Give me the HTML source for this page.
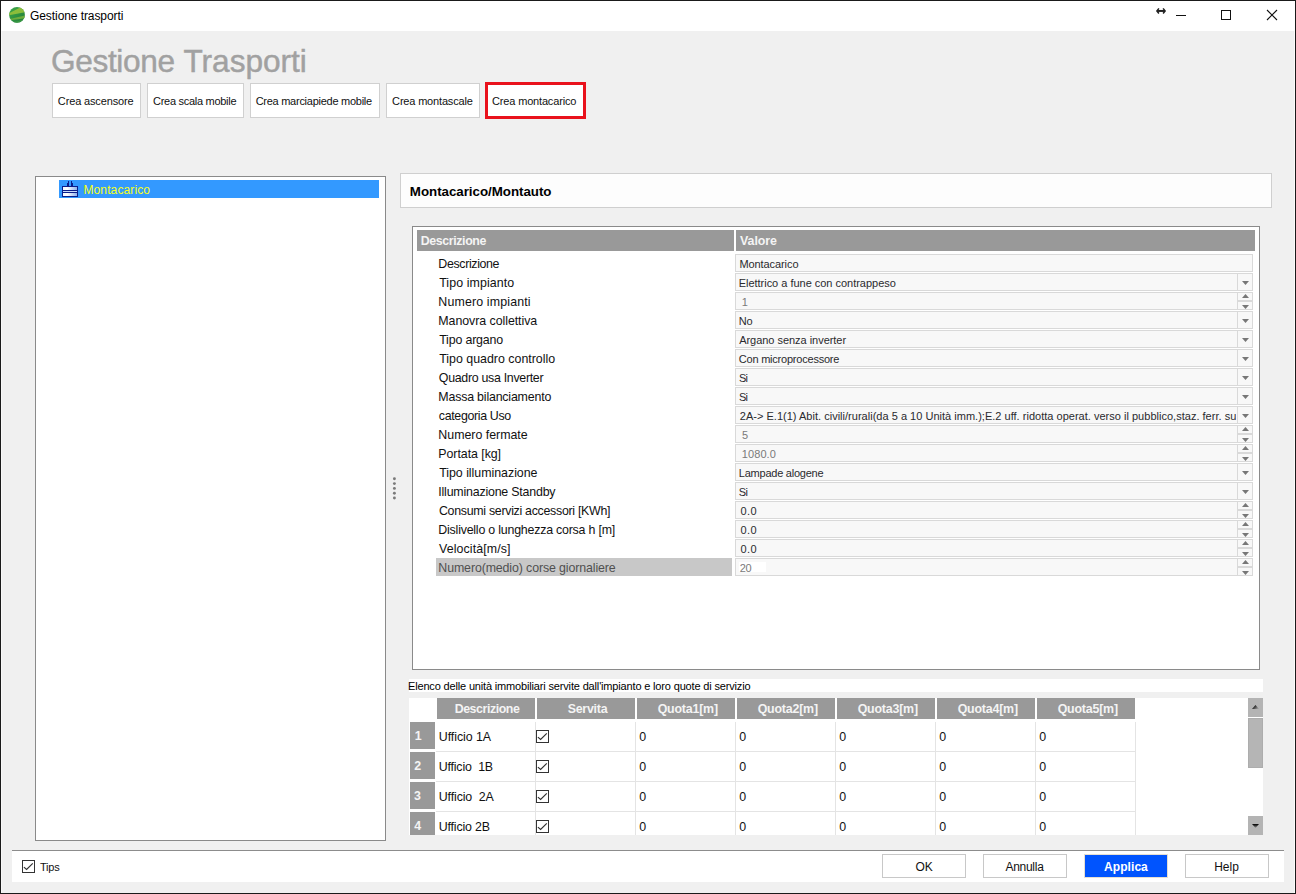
<!DOCTYPE html><html lang="it"><head><meta charset="utf-8"><title>Gestione trasporti</title><style>
*{box-sizing:border-box;margin:0;padding:0}
html,body{width:1296px;height:894px;overflow:hidden;background:#f0f0f0;font-family:"Liberation Sans",sans-serif;color:#000}
.a{position:absolute}
.t{position:absolute;white-space:nowrap}
.btn{position:absolute;top:83px;height:35px;background:#fff;border:1px solid #d0d0d0}
.fld{position:absolute;left:735px;width:518px;height:18px;background:#f8f8f8;border:1px solid #d9d9d9}
.bt{position:absolute;left:1237px;width:16px;height:18px;border-left:1px solid #d9d9d9}
.hd{position:absolute;background:#999}
.rh{position:absolute;left:410px;width:25px;background:#999}
.cb{position:absolute;width:13px;height:13px;border:1px solid #333;background:#fff}
.bb{position:absolute;top:854px;height:24px;width:84px;background:#fff;border:1px solid #c8c8c8}
.gl{position:absolute;background:#e4e4e4}
</style></head><body>
<div class="a" style="left:0;top:0;width:1296px;height:1px;background:#1a1a1a"></div>
<div class="a" style="left:0;top:0;width:1px;height:894px;background:#1a1a1a"></div>
<div class="a" style="left:1295px;top:0;width:1px;height:894px;background:#1a1a1a"></div>
<div class="a" style="left:0;top:893px;width:1296px;height:1px;background:#1a1a1a"></div>
<div class="a" style="left:1294px;top:31px;width:1px;height:862px;background:#fbfbfb"></div>
<div class="a" style="left:1px;top:31px;width:1px;height:862px;background:#f8f8f8"></div>
<div class="a" style="left:1px;top:1px;width:1294px;height:30px;background:#fff"></div>
<svg class="a" style="left:9px;top:7px" width="16" height="16" viewBox="0 0 16 16"><defs><clipPath id="cc"><circle cx="8" cy="7.9" r="7.9"/></clipPath><linearGradient id="cg" x1="0" y1="0" x2="1" y2="1"><stop offset="0" stop-color="#3fa94a"/><stop offset="0.55" stop-color="#2c8f40"/><stop offset="1" stop-color="#237a3c"/></linearGradient></defs><g clip-path="url(#cc)"><rect width="16" height="16" fill="url(#cg)"/><path d="M-1 6.6 Q5.5 3.6 11.2 0.6 L17 1 L17 5 Q8 6.9 -1 8.4Z" fill="#8bbd3b"/><path d="M1 11.9 Q8 10.2 17 8.2 L17 11 Q9 12.1 2.4 13.1Z" fill="#6dac3b"/><path d="M3 14.6 Q9 14.9 14 12.6 L12 15.5 L6 16Z" fill="#3a9a44"/></g></svg>
<div class="t" id="f1" style="left:30.02px;top:9.34px;font-size:12px;line-height:15px;color:#000;letter-spacing:-0.079px;">Gestione trasporti</div>
<svg class="a" style="left:1150px;top:4px" width="140" height="24" viewBox="0 0 140 24"><path d="M8.9 4.4 L6.9 6.95 L8.9 9.5 M13.1 4.4 L15.1 6.95 L13.1 9.5" fill="none" stroke="#222" stroke-width="1.5"/><path d="M7 6.95 H15" stroke="#222" stroke-width="2"/><rect x="26" y="11" width="10" height="1" fill="#111"/><rect x="71.5" y="6.5" width="9" height="9" fill="none" stroke="#111" stroke-width="1"/><path d="M117 6 L127 16 M127 6 L117 16" stroke="#111" stroke-width="1.1" fill="none"/></svg>
<div class="t" id="f2" style="left:51.09px;top:42.05px;font-size:31.6px;line-height:38px;color:#a1a1a1;letter-spacing:-0.357px;-webkit-text-stroke:0.45px #a1a1a1;">Gestione</div>
<div class="t" id="f3" style="left:183.51px;top:42.05px;font-size:31.6px;line-height:38px;color:#a1a1a1;letter-spacing:-0.027px;-webkit-text-stroke:0.45px #a1a1a1;">Trasporti</div>
<div class="btn" style="left:52px;width:89px"></div>
<div class="t" id="f4" style="left:57.87px;top:94.19px;font-size:11px;line-height:14px;color:#111;letter-spacing:-0.143px;">Crea ascensore</div>
<div class="btn" style="left:147px;width:97px"></div>
<div class="t" id="f5" style="left:153.04px;top:94.19px;font-size:11px;line-height:14px;color:#111;letter-spacing:-0.283px;">Crea scala mobile</div>
<div class="btn" style="left:250px;width:130px"></div>
<div class="t" id="f6" style="left:255.65px;top:94.19px;font-size:11px;line-height:14px;color:#111;letter-spacing:-0.263px;">Crea marciapiede mobile</div>
<div class="btn" style="left:386px;width:94px"></div>
<div class="t" id="f7" style="left:392.12px;top:94.19px;font-size:11px;line-height:14px;color:#111;letter-spacing:-0.175px;">Crea montascale</div>
<div class="btn" style="left:485px;top:82px;width:101px;height:37px;border:3px solid #e9121c"></div>
<div class="t" id="f8" style="left:492.08px;top:94.19px;font-size:11px;line-height:14px;color:#111;letter-spacing:-0.169px;">Crea montacarico</div>
<div class="a" style="left:35px;top:176px;width:351px;height:665px;background:#fff;border:1px solid #8a8a8a"></div>
<div class="a" style="left:59px;top:180px;width:320px;height:18px;background:#3399ff"></div>
<svg class="a" style="left:62px;top:181px" width="16" height="16" viewBox="0 0 16 16" shape-rendering="crispEdges"><defs><linearGradient id="ig" x1="0" y1="0" x2="1" y2="0"><stop offset="0" stop-color="#f2f7ff"/><stop offset="0.3" stop-color="#ffffff"/><stop offset="1" stop-color="#8fb1ec"/></linearGradient></defs><rect x="6" y="0" width="1" height="5" fill="#0b1d8a"/><rect x="5" y="2" width="2" height="3" fill="#0b1d8a"/><rect x="9" y="0" width="1" height="5" fill="#0b1d8a"/><rect x="9" y="2" width="2" height="3" fill="#0b1d8a"/><rect x="0" y="5" width="16" height="11" fill="#0b1d8a"/><rect x="1" y="6" width="14" height="3" fill="url(#ig)"/><rect x="1" y="10" width="14" height="1" fill="#c9dcfb"/><rect x="1" y="12" width="14" height="3" fill="url(#ig)"/></svg>
<div class="t" id="f9" style="left:83.48px;top:183.34px;font-size:12px;line-height:15px;color:#f6ff20;letter-spacing:0.117px;">Montacarico</div>
<svg class="a" style="left:390px;top:474px" width="9" height="30" viewBox="0 0 9 30"><circle cx="4.4" cy="4.8" r="1.45" fill="#7a7a7a"/><circle cx="4.4" cy="9.6" r="1.45" fill="#7a7a7a"/><circle cx="4.4" cy="14.4" r="1.45" fill="#7a7a7a"/><circle cx="4.4" cy="19.2" r="1.45" fill="#7a7a7a"/><circle cx="4.4" cy="24.0" r="1.45" fill="#7a7a7a"/></svg>
<div class="a" style="left:400px;top:173px;width:872px;height:35px;background:#fdfdfd;border:1px solid #cfcfcf"></div>
<div class="t" id="f10" style="left:409.83px;top:183.88px;font-size:13.33px;line-height:16px;color:#000;font-weight:bold;letter-spacing:-0.026px;">Montacarico/Montauto</div>
<div class="a" style="left:412px;top:226px;width:848px;height:444px;background:#fff;border:1px solid #8a8a8a"></div>
<div class="hd" style="left:417px;top:230px;width:317px;height:21px"></div>
<div class="hd" style="left:736px;top:230px;width:519px;height:21px"></div>
<div class="t" id="f11" style="left:420.73px;top:234.20px;font-size:12.4px;line-height:15px;color:#f4f4f4;font-weight:bold;letter-spacing:-0.388px;">Descrizione</div>
<div class="t" id="f12" style="left:740.11px;top:234.20px;font-size:12.4px;line-height:15px;color:#f4f4f4;font-weight:bold;letter-spacing:-0.068px;">Valore</div>
<div class="t" id="f13" style="left:438.34px;top:257.20px;font-size:12.4px;line-height:15px;color:#111;letter-spacing:-0.355px;">Descrizione</div>
<div class="fld" style="top:254px"></div>
<div class="t" id="f14" style="left:739.42px;top:257.19px;font-size:11px;line-height:14px;color:#2a2a2e;letter-spacing:-0.081px;">Montacarico</div>
<div class="t" id="f15" style="left:439.17px;top:276.20px;font-size:12.4px;line-height:15px;color:#111;letter-spacing:0.087px;">Tipo impianto</div>
<div class="fld" style="top:273px"></div>
<div class="a" style="left:736px;top:274px;width:500.4px;height:16px;overflow:hidden"><div class="a" style="left:-736px;top:-274px"><div class="t" id="f16" style="left:738.65px;top:276.19px;font-size:11px;line-height:14px;color:#2a2a2e;letter-spacing:-0.018px;">Elettrico a fune con contrappeso</div></div></div>
<div class="bt" style="top:273px"><svg class="a" style="left:4px;top:8px" width="7" height="4" viewBox="0 0 7 4"><path d="M0 0H7L3.5 4Z" fill="#777"/></svg></div>
<div class="t" id="f17" style="left:438.34px;top:295.20px;font-size:12.4px;line-height:15px;color:#111;letter-spacing:0.146px;">Numero impianti</div>
<div class="fld" style="top:292px"></div>
<div class="t" id="f18" style="left:741.78px;top:295.19px;font-size:11px;line-height:14px;color:#7a7a7a;">1</div>
<div class="bt" style="top:292px"><div class="a" style="left:0;top:8px;width:15px;height:2px;background:#d9d9d9"></div><svg class="a" style="left:4px;top:2px" width="7" height="4" viewBox="0 0 7 4"><path d="M0 4H7L3.5 0Z" fill="#777"/></svg><svg class="a" style="left:4px;top:13px" width="7" height="4" viewBox="0 0 7 4"><path d="M0 0H7L3.5 4Z" fill="#777"/></svg></div>
<div class="t" id="f19" style="left:438.34px;top:314.20px;font-size:12.4px;line-height:15px;color:#111;letter-spacing:-0.056px;">Manovra collettiva</div>
<div class="fld" style="top:311px"></div>
<div class="a" style="left:736px;top:312px;width:500.4px;height:16px;overflow:hidden"><div class="a" style="left:-736px;top:-312px"><div class="t" id="f20" style="left:738.72px;top:314.19px;font-size:11px;line-height:14px;color:#2a2a2e;letter-spacing:-0.168px;">No</div></div></div>
<div class="bt" style="top:311px"><svg class="a" style="left:4px;top:8px" width="7" height="4" viewBox="0 0 7 4"><path d="M0 0H7L3.5 4Z" fill="#777"/></svg></div>
<div class="t" id="f21" style="left:439.17px;top:333.20px;font-size:12.4px;line-height:15px;color:#111;letter-spacing:-0.163px;">Tipo argano</div>
<div class="fld" style="top:330px"></div>
<div class="a" style="left:736px;top:331px;width:500.4px;height:16px;overflow:hidden"><div class="a" style="left:-736px;top:-331px"><div class="t" id="f22" style="left:739.16px;top:333.19px;font-size:11px;line-height:14px;color:#2a2a2e;letter-spacing:-0.033px;">Argano senza inverter</div></div></div>
<div class="bt" style="top:330px"><svg class="a" style="left:4px;top:8px" width="7" height="4" viewBox="0 0 7 4"><path d="M0 0H7L3.5 4Z" fill="#777"/></svg></div>
<div class="t" id="f23" style="left:439.17px;top:352.20px;font-size:12.4px;line-height:15px;color:#111;letter-spacing:0.002px;">Tipo quadro controllo</div>
<div class="fld" style="top:349px"></div>
<div class="a" style="left:736px;top:350px;width:500.4px;height:16px;overflow:hidden"><div class="a" style="left:-736px;top:-350px"><div class="t" id="f24" style="left:738.77px;top:352.19px;font-size:11px;line-height:14px;color:#2a2a2e;letter-spacing:-0.215px;">Con microprocessore</div></div></div>
<div class="bt" style="top:349px"><svg class="a" style="left:4px;top:8px" width="7" height="4" viewBox="0 0 7 4"><path d="M0 0H7L3.5 4Z" fill="#777"/></svg></div>
<div class="t" id="f25" style="left:438.83px;top:371.20px;font-size:12.4px;line-height:15px;color:#111;letter-spacing:-0.304px;">Quadro usa Inverter</div>
<div class="fld" style="top:368px"></div>
<div class="a" style="left:736px;top:369px;width:500.4px;height:16px;overflow:hidden"><div class="a" style="left:-736px;top:-369px"><div class="t" id="f26" style="left:739.06px;top:371.19px;font-size:11px;line-height:14px;color:#2a2a2e;letter-spacing:-0.784px;">Si</div></div></div>
<div class="bt" style="top:368px"><svg class="a" style="left:4px;top:8px" width="7" height="4" viewBox="0 0 7 4"><path d="M0 0H7L3.5 4Z" fill="#777"/></svg></div>
<div class="t" id="f27" style="left:438.34px;top:390.20px;font-size:12.4px;line-height:15px;color:#111;letter-spacing:-0.191px;">Massa bilanciamento</div>
<div class="fld" style="top:387px"></div>
<div class="a" style="left:736px;top:388px;width:500.4px;height:16px;overflow:hidden"><div class="a" style="left:-736px;top:-388px"><div class="t" id="f28" style="left:739.06px;top:390.19px;font-size:11px;line-height:14px;color:#2a2a2e;letter-spacing:-0.784px;">Si</div></div></div>
<div class="bt" style="top:387px"><svg class="a" style="left:4px;top:8px" width="7" height="4" viewBox="0 0 7 4"><path d="M0 0H7L3.5 4Z" fill="#777"/></svg></div>
<div class="t" id="f29" style="left:438.82px;top:409.20px;font-size:12.4px;line-height:15px;color:#111;letter-spacing:-0.339px;">categoria Uso</div>
<div class="fld" style="top:406px"></div>
<div class="a" style="left:736px;top:407px;width:500.4px;height:16px;overflow:hidden"><div class="a" style="left:-736px;top:-407px"><div class="t" id="f30" style="left:739.82px;top:409.19px;font-size:11px;line-height:14px;color:#2a2a2e;letter-spacing:0.016px;">2A-&gt; E.1(1) Abit. civili/rurali(da 5 a 10 Unità imm.);E.2 uff. ridotta operat. verso il pubblico,staz. ferr. su</div></div></div>
<div class="bt" style="top:406px"><svg class="a" style="left:4px;top:8px" width="7" height="4" viewBox="0 0 7 4"><path d="M0 0H7L3.5 4Z" fill="#777"/></svg></div>
<div class="t" id="f31" style="left:438.34px;top:428.20px;font-size:12.4px;line-height:15px;color:#111;letter-spacing:-0.015px;">Numero fermate</div>
<div class="fld" style="top:425px"></div>
<div class="t" id="f32" style="left:742.01px;top:428.19px;font-size:11px;line-height:14px;color:#7a7a7a;">5</div>
<div class="bt" style="top:425px"><div class="a" style="left:0;top:8px;width:15px;height:2px;background:#d9d9d9"></div><svg class="a" style="left:4px;top:2px" width="7" height="4" viewBox="0 0 7 4"><path d="M0 4H7L3.5 0Z" fill="#777"/></svg><svg class="a" style="left:4px;top:13px" width="7" height="4" viewBox="0 0 7 4"><path d="M0 0H7L3.5 4Z" fill="#777"/></svg></div>
<div class="t" id="f33" style="left:438.34px;top:447.20px;font-size:12.4px;line-height:15px;color:#111;letter-spacing:-0.059px;">Portata [kg]</div>
<div class="fld" style="top:444px"></div>
<div class="t" id="f34" style="left:741.79px;top:447.19px;font-size:11px;line-height:14px;color:#7a7a7a;letter-spacing:0.083px;">1080.0</div>
<div class="bt" style="top:444px"><div class="a" style="left:0;top:8px;width:15px;height:2px;background:#d9d9d9"></div><svg class="a" style="left:4px;top:2px" width="7" height="4" viewBox="0 0 7 4"><path d="M0 4H7L3.5 0Z" fill="#777"/></svg><svg class="a" style="left:4px;top:13px" width="7" height="4" viewBox="0 0 7 4"><path d="M0 0H7L3.5 4Z" fill="#777"/></svg></div>
<div class="t" id="f35" style="left:439.17px;top:466.20px;font-size:12.4px;line-height:15px;color:#111;letter-spacing:-0.022px;">Tipo illuminazione</div>
<div class="fld" style="top:463px"></div>
<div class="a" style="left:736px;top:464px;width:500.4px;height:16px;overflow:hidden"><div class="a" style="left:-736px;top:-464px"><div class="t" id="f36" style="left:738.84px;top:466.19px;font-size:11px;line-height:14px;color:#2a2a2e;letter-spacing:-0.238px;">Lampade alogene</div></div></div>
<div class="bt" style="top:463px"><svg class="a" style="left:4px;top:8px" width="7" height="4" viewBox="0 0 7 4"><path d="M0 0H7L3.5 4Z" fill="#777"/></svg></div>
<div class="t" id="f37" style="left:438.30px;top:485.20px;font-size:12.4px;line-height:15px;color:#111;letter-spacing:-0.198px;">Illuminazione Standby</div>
<div class="fld" style="top:482px"></div>
<div class="a" style="left:736px;top:483px;width:500.4px;height:16px;overflow:hidden"><div class="a" style="left:-736px;top:-483px"><div class="t" id="f38" style="left:738.85px;top:485.19px;font-size:11px;line-height:14px;color:#2a2a2e;letter-spacing:-0.606px;">Si</div></div></div>
<div class="bt" style="top:482px"><svg class="a" style="left:4px;top:8px" width="7" height="4" viewBox="0 0 7 4"><path d="M0 0H7L3.5 4Z" fill="#777"/></svg></div>
<div class="t" id="f39" style="left:438.91px;top:504.20px;font-size:12.4px;line-height:15px;color:#111;letter-spacing:-0.293px;">Consumi servizi accessori [KWh]</div>
<div class="fld" style="top:501px"></div>
<div class="t" id="f40" style="left:740.44px;top:504.19px;font-size:11px;line-height:14px;color:#2a2a2e;letter-spacing:0.422px;">0.0</div>
<div class="bt" style="top:501px"><div class="a" style="left:0;top:8px;width:15px;height:2px;background:#d9d9d9"></div><svg class="a" style="left:4px;top:2px" width="7" height="4" viewBox="0 0 7 4"><path d="M0 4H7L3.5 0Z" fill="#777"/></svg><svg class="a" style="left:4px;top:13px" width="7" height="4" viewBox="0 0 7 4"><path d="M0 0H7L3.5 4Z" fill="#777"/></svg></div>
<div class="t" id="f41" style="left:438.34px;top:523.20px;font-size:12.4px;line-height:15px;color:#111;letter-spacing:-0.212px;">Dislivello o lunghezza corsa h [m]</div>
<div class="fld" style="top:520px"></div>
<div class="t" id="f42" style="left:740.44px;top:523.19px;font-size:11px;line-height:14px;color:#2a2a2e;letter-spacing:0.422px;">0.0</div>
<div class="bt" style="top:520px"><div class="a" style="left:0;top:8px;width:15px;height:2px;background:#d9d9d9"></div><svg class="a" style="left:4px;top:2px" width="7" height="4" viewBox="0 0 7 4"><path d="M0 4H7L3.5 0Z" fill="#777"/></svg><svg class="a" style="left:4px;top:13px" width="7" height="4" viewBox="0 0 7 4"><path d="M0 0H7L3.5 4Z" fill="#777"/></svg></div>
<div class="t" id="f43" style="left:439.12px;top:542.20px;font-size:12.4px;line-height:15px;color:#111;letter-spacing:0.087px;">Velocità[m/s]</div>
<div class="fld" style="top:539px"></div>
<div class="t" id="f44" style="left:740.44px;top:542.19px;font-size:11px;line-height:14px;color:#2a2a2e;letter-spacing:0.422px;">0.0</div>
<div class="bt" style="top:539px"><div class="a" style="left:0;top:8px;width:15px;height:2px;background:#d9d9d9"></div><svg class="a" style="left:4px;top:2px" width="7" height="4" viewBox="0 0 7 4"><path d="M0 4H7L3.5 0Z" fill="#777"/></svg><svg class="a" style="left:4px;top:13px" width="7" height="4" viewBox="0 0 7 4"><path d="M0 0H7L3.5 4Z" fill="#777"/></svg></div>
<div class="a" style="left:436px;top:558px;width:296px;height:18px;background:#c8c8c8"></div>
<div class="t" id="f45" style="left:438.34px;top:561.20px;font-size:12.4px;line-height:15px;color:#505050;letter-spacing:-0.126px;">Numero(medio) corse giornaliere</div>
<div class="fld" style="top:558px"></div>
<div class="a nofit" style="left:739px;top:562px;width:27px;height:10px;background:#fff"></div>
<div class="t" id="f46" style="left:739.79px;top:561.19px;font-size:11px;line-height:14px;color:#7a7a7a;letter-spacing:-0.398px;">20</div>
<div class="bt" style="top:558px"><div class="a" style="left:0;top:8px;width:15px;height:2px;background:#d9d9d9"></div><svg class="a" style="left:4px;top:2px" width="7" height="4" viewBox="0 0 7 4"><path d="M0 4H7L3.5 0Z" fill="#777"/></svg><svg class="a" style="left:4px;top:13px" width="7" height="4" viewBox="0 0 7 4"><path d="M0 0H7L3.5 4Z" fill="#777"/></svg></div>
<div class="a" style="left:409px;top:679px;width:854px;height:13px;background:#fff"></div>
<div class="t" id="f47" style="left:408.00px;top:679.19px;font-size:11px;line-height:14px;color:#000;letter-spacing:-0.162px;">Elenco delle unità immobiliari servite dall'impianto e loro quote di servizio</div>
<div class="a" style="left:409px;top:698px;width:854px;height:137px;background:#fff"></div>
<div class="hd" style="left:437px;top:698px;width:98px;height:21px"></div>
<div class="t" id="f48" style="left:454.66px;top:702.20px;font-size:12.4px;line-height:15px;color:#f4f4f4;font-weight:bold;letter-spacing:-0.444px;">Descrizione</div>
<div class="hd" style="left:537px;top:698px;width:98px;height:21px"></div>
<div class="t" id="f49" style="left:567.65px;top:702.20px;font-size:12.4px;line-height:15px;color:#f4f4f4;font-weight:bold;letter-spacing:-0.239px;">Servita</div>
<div class="hd" style="left:637px;top:698px;width:98px;height:21px"></div>
<div class="t" id="f50" style="left:657.69px;top:702.20px;font-size:12.4px;line-height:15px;color:#f4f4f4;font-weight:bold;letter-spacing:-0.204px;">Quota1[m]</div>
<div class="hd" style="left:737px;top:698px;width:98px;height:21px"></div>
<div class="t" id="f51" style="left:757.69px;top:702.20px;font-size:12.4px;line-height:15px;color:#f4f4f4;font-weight:bold;letter-spacing:-0.204px;">Quota2[m]</div>
<div class="hd" style="left:837px;top:698px;width:98px;height:21px"></div>
<div class="t" id="f52" style="left:857.69px;top:702.20px;font-size:12.4px;line-height:15px;color:#f4f4f4;font-weight:bold;letter-spacing:-0.204px;">Quota3[m]</div>
<div class="hd" style="left:937px;top:698px;width:98px;height:21px"></div>
<div class="t" id="f53" style="left:957.69px;top:702.20px;font-size:12.4px;line-height:15px;color:#f4f4f4;font-weight:bold;letter-spacing:-0.204px;">Quota4[m]</div>
<div class="hd" style="left:1037px;top:698px;width:98px;height:21px"></div>
<div class="t" id="f54" style="left:1057.69px;top:702.20px;font-size:12.4px;line-height:15px;color:#f4f4f4;font-weight:bold;letter-spacing:-0.204px;">Quota5[m]</div>
<div class="rh" style="top:722px;height:27px"></div>
<div class="t" id="f55" style="left:414.73px;top:729.20px;font-size:12.4px;line-height:15px;color:#f4f4f4;font-weight:bold;">1</div>
<div class="t" id="f56" style="left:438.76px;top:730.20px;font-size:12.4px;line-height:15px;color:#111;letter-spacing:-0.052px;">Ufficio 1A</div>
<div class="cb" style="left:536px;top:730px"><svg class="a" style="left:0;top:0" width="11" height="11" viewBox="0 0 11 11"><path d="M0.9 6.1 L3.6 8.5 L9.8 2.3" fill="none" stroke="#333" stroke-width="1.2"/></svg></div>
<div class="t" id="f57" style="left:639.18px;top:730.20px;font-size:12.4px;line-height:15px;color:#111;">0</div>
<div class="t" id="f58" style="left:739.18px;top:730.20px;font-size:12.4px;line-height:15px;color:#111;">0</div>
<div class="t" id="f59" style="left:839.18px;top:730.20px;font-size:12.4px;line-height:15px;color:#111;">0</div>
<div class="t" id="f60" style="left:939.18px;top:730.20px;font-size:12.4px;line-height:15px;color:#111;">0</div>
<div class="t" id="f61" style="left:1039.18px;top:730.20px;font-size:12.4px;line-height:15px;color:#111;">0</div>
<div class="gl" style="left:436px;top:751px;width:700px;height:1px"></div>
<div class="rh" style="top:752px;height:27px"></div>
<div class="t" id="f62" style="left:414.23px;top:759.20px;font-size:12.4px;line-height:15px;color:#f4f4f4;font-weight:bold;">2</div>
<div class="t" id="f63" style="left:438.76px;top:760.20px;font-size:12.4px;line-height:15px;color:#111;letter-spacing:-0.186px;">Ufficio&nbsp; 1B</div>
<div class="cb" style="left:536px;top:760px"><svg class="a" style="left:0;top:0" width="11" height="11" viewBox="0 0 11 11"><path d="M0.9 6.1 L3.6 8.5 L9.8 2.3" fill="none" stroke="#333" stroke-width="1.2"/></svg></div>
<div class="t" id="f64" style="left:639.18px;top:760.20px;font-size:12.4px;line-height:15px;color:#111;">0</div>
<div class="t" id="f65" style="left:739.18px;top:760.20px;font-size:12.4px;line-height:15px;color:#111;">0</div>
<div class="t" id="f66" style="left:839.18px;top:760.20px;font-size:12.4px;line-height:15px;color:#111;">0</div>
<div class="t" id="f67" style="left:939.18px;top:760.20px;font-size:12.4px;line-height:15px;color:#111;">0</div>
<div class="t" id="f68" style="left:1039.18px;top:760.20px;font-size:12.4px;line-height:15px;color:#111;">0</div>
<div class="gl" style="left:436px;top:781px;width:700px;height:1px"></div>
<div class="rh" style="top:782px;height:27px"></div>
<div class="t" id="f69" style="left:414.10px;top:789.20px;font-size:12.4px;line-height:15px;color:#f4f4f4;font-weight:bold;">3</div>
<div class="t" id="f70" style="left:438.76px;top:790.20px;font-size:12.4px;line-height:15px;color:#111;letter-spacing:-0.116px;">Ufficio&nbsp; 2A</div>
<div class="cb" style="left:536px;top:790px"><svg class="a" style="left:0;top:0" width="11" height="11" viewBox="0 0 11 11"><path d="M0.9 6.1 L3.6 8.5 L9.8 2.3" fill="none" stroke="#333" stroke-width="1.2"/></svg></div>
<div class="t" id="f71" style="left:639.18px;top:790.20px;font-size:12.4px;line-height:15px;color:#111;">0</div>
<div class="t" id="f72" style="left:739.18px;top:790.20px;font-size:12.4px;line-height:15px;color:#111;">0</div>
<div class="t" id="f73" style="left:839.18px;top:790.20px;font-size:12.4px;line-height:15px;color:#111;">0</div>
<div class="t" id="f74" style="left:939.18px;top:790.20px;font-size:12.4px;line-height:15px;color:#111;">0</div>
<div class="t" id="f75" style="left:1039.18px;top:790.20px;font-size:12.4px;line-height:15px;color:#111;">0</div>
<div class="gl" style="left:436px;top:811px;width:700px;height:1px"></div>
<div class="rh" style="top:812px;height:23px"></div>
<div class="t" id="f76" style="left:414.17px;top:819.20px;font-size:12.4px;line-height:15px;color:#f4f4f4;font-weight:bold;">4</div>
<div class="t" id="f77" style="left:438.76px;top:820.20px;font-size:12.4px;line-height:15px;color:#111;letter-spacing:-0.167px;">Ufficio 2B</div>
<div class="cb" style="left:536px;top:820px"><svg class="a" style="left:0;top:0" width="11" height="11" viewBox="0 0 11 11"><path d="M0.9 6.1 L3.6 8.5 L9.8 2.3" fill="none" stroke="#333" stroke-width="1.2"/></svg></div>
<div class="t" id="f78" style="left:639.18px;top:820.20px;font-size:12.4px;line-height:15px;color:#111;">0</div>
<div class="t" id="f79" style="left:739.18px;top:820.20px;font-size:12.4px;line-height:15px;color:#111;">0</div>
<div class="t" id="f80" style="left:839.18px;top:820.20px;font-size:12.4px;line-height:15px;color:#111;">0</div>
<div class="t" id="f81" style="left:939.18px;top:820.20px;font-size:12.4px;line-height:15px;color:#111;">0</div>
<div class="t" id="f82" style="left:1039.18px;top:820.20px;font-size:12.4px;line-height:15px;color:#111;">0</div>
<div class="gl" style="left:535px;top:722px;width:1px;height:113px"></div>
<div class="gl" style="left:635px;top:722px;width:1px;height:113px"></div>
<div class="gl" style="left:735px;top:722px;width:1px;height:113px"></div>
<div class="gl" style="left:835px;top:722px;width:1px;height:113px"></div>
<div class="gl" style="left:935px;top:722px;width:1px;height:113px"></div>
<div class="gl" style="left:1035px;top:722px;width:1px;height:113px"></div>
<div class="gl" style="left:1135px;top:722px;width:1px;height:113px"></div>
<div class="a" style="left:1248px;top:698px;width:15px;height:19px;background:#b4b4b4"></div>
<svg class="a" style="left:1252px;top:705px" width="7" height="4" viewBox="0 0 7 4"><defs><linearGradient id="g1" x1="0" y1="0" x2="1" y2="0.6"><stop offset="0.2" stop-color="#000"/><stop offset="1" stop-color="#9a9a9a"/></linearGradient><linearGradient id="g2" x1="0" y1="0" x2="0" y2="1"><stop offset="0.2" stop-color="#111"/><stop offset="1" stop-color="#9a9a9a"/></linearGradient></defs><path d="M0 4H7L3.5 0Z" fill="url(#g1)"/></svg>
<div class="a" style="left:1248px;top:718px;width:15px;height:50px;background:#b5b5b5;border:1px solid #adadad"></div>
<div class="a" style="left:1248px;top:816px;width:15px;height:19px;background:#b4b4b4"></div>
<svg class="a" style="left:1252px;top:824px" width="7" height="4" viewBox="0 0 7 4"><path d="M0 0H7L3.5 4Z" fill="url(#g2)"/></svg>
<div class="a" style="left:12px;top:850px;width:1272px;height:1px;background:#8c8c8c"></div>
<div class="a" style="left:12px;top:851px;width:1272px;height:31px;background:#fff"></div>
<div class="cb" style="left:22px;top:860px"><svg class="a" style="left:0;top:0" width="11" height="11" viewBox="0 0 11 11"><path d="M0.9 6.1 L3.6 8.5 L9.8 2.3" fill="none" stroke="#333" stroke-width="1.2"/></svg></div>
<div class="t" id="f83" style="left:39.90px;top:860.19px;font-size:11px;line-height:14px;color:#111;letter-spacing:-0.207px;">Tips</div>
<div class="bb" style="left:882px"></div>
<div class="t" id="f84" style="left:915.53px;top:860.34px;font-size:12px;line-height:15px;color:#111;letter-spacing:-0.207px;">OK</div>
<div class="bb" style="left:983px"></div>
<div class="t" id="f85" style="left:1005.47px;top:860.34px;font-size:12px;line-height:15px;color:#111;letter-spacing:-0.282px;">Annulla</div>
<div class="bb" style="left:1084px;background:#0054fe;border-color:#e6dfd2"></div>
<div class="t" id="f86" style="left:1104.12px;top:860.34px;font-size:12px;line-height:15px;color:#fff;font-weight:bold;letter-spacing:0.056px;">Applica</div>
<div class="bb" style="left:1185px"></div>
<div class="t" id="f87" style="left:1214.18px;top:860.34px;font-size:12px;line-height:15px;color:#111;letter-spacing:0.031px;">Help</div>
</body></html>
